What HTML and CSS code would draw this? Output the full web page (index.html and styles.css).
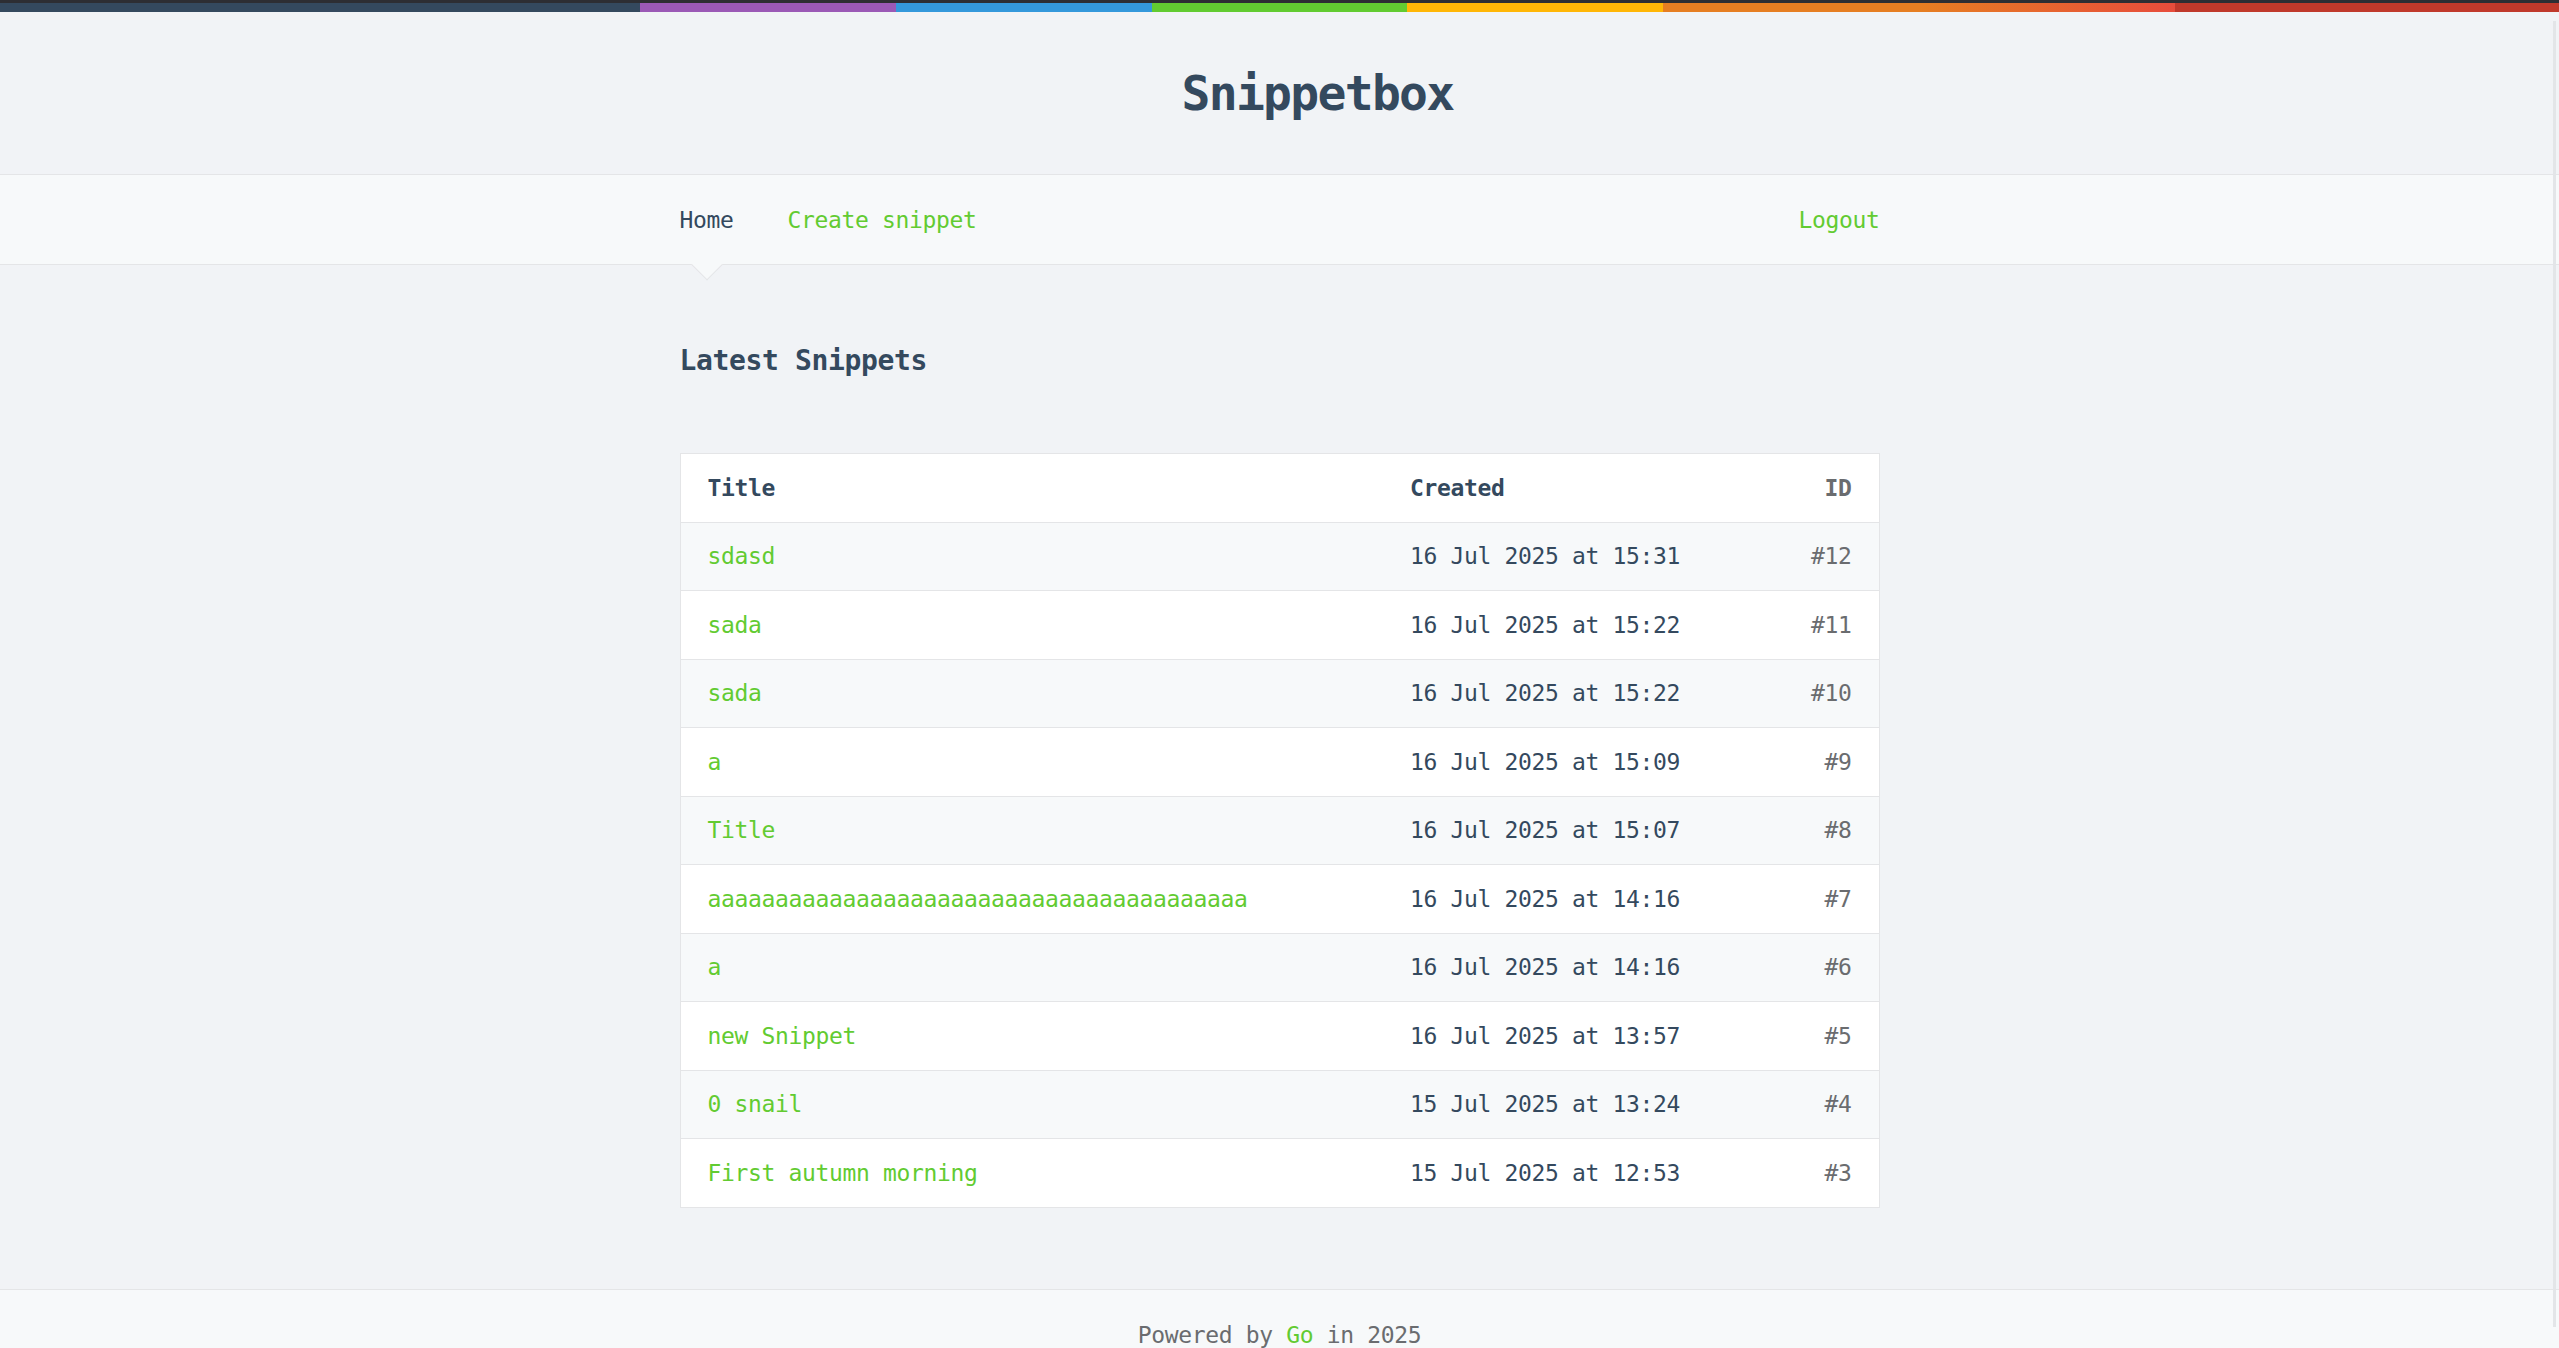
FILE: index.html
```html
<!DOCTYPE html>
<html lang="en">
<head>
<meta charset="utf-8">
<title>Home - Snippetbox</title>
<link rel="stylesheet" href="styles.css">
</head>
<body>
<div class="topline"></div>
<header class="site-header">
  <h1 class="brand"><a href="/">Snippetbox</a></h1>
</header>
<nav class="site-nav">
  <div class="nav-inner">
    <div class="nav-left">
      <a href="/" class="nav-link live">Home</a>
      <a href="/snippet/create" class="nav-link">Create snippet</a>
    </div>
    <div class="nav-right">
      <a href="/user/logout" class="nav-link">Logout</a>
    </div>
  </div>
</nav>
<main class="content">
  <h2 class="page-title">Latest Snippets</h2>
  <table class="snippets">
    <tr>
      <th class="col-title">Title</th>
      <th class="col-created">Created</th>
      <th class="col-id">ID</th>
    </tr>
    <tr><td><a href="#">sdasd</a></td><td>16 Jul 2025 at 15:31</td><td>#12</td></tr>
    <tr><td><a href="#">sada</a></td><td>16 Jul 2025 at 15:22</td><td>#11</td></tr>
    <tr><td><a href="#">sada</a></td><td>16 Jul 2025 at 15:22</td><td>#10</td></tr>
    <tr><td><a href="#">a</a></td><td>16 Jul 2025 at 15:09</td><td>#9</td></tr>
    <tr><td><a href="#">Title</a></td><td>16 Jul 2025 at 15:07</td><td>#8</td></tr>
    <tr><td><a href="#">aaaaaaaaaaaaaaaaaaaaaaaaaaaaaaaaaaaaaaaa</a></td><td>16 Jul 2025 at 14:16</td><td>#7</td></tr>
    <tr><td><a href="#">a</a></td><td>16 Jul 2025 at 14:16</td><td>#6</td></tr>
    <tr><td><a href="#">new Snippet</a></td><td>16 Jul 2025 at 13:57</td><td>#5</td></tr>
    <tr><td><a href="#">0 snail</a></td><td>15 Jul 2025 at 13:24</td><td>#4</td></tr>
    <tr><td><a href="#">First autumn morning</a></td><td>15 Jul 2025 at 12:53</td><td>#3</td></tr>
  </table>
</main>
<footer class="site-footer">
  Powered by <a href="https://golang.org/">Go</a> in 2025
</footer>
<div class="overlay-scroll"></div>
</body>
</html>
```
FILE: styles.css
```css
* {
  box-sizing: border-box;
  margin: 0;
  padding: 0;
}

html, body {
  background-color: #F1F3F6;
}

body {
  font-family: "DejaVu Sans Mono", "Liberation Mono", monospace;
  font-size: 23px;
  letter-spacing: -0.35px;
  line-height: 40.5px;
  color: #34495E;
  overflow: hidden;
}

a {
  color: #62CB31;
  text-decoration: none;
}

.topline {
  height: 3px;
  background: #2d2e33;
}

.site-header {
  background-image: linear-gradient(to right, #34495e, #34495e 25%, #9b59b6 25%, #9b59b6 35%, #3498db 35%, #3498db 45%, #62cb31 45%, #62cb31 55%, #ffb606 55%, #ffb606 65%, #e67e22 65%, #e67e22 75%, #e74c3c 85%, #e74c3c 85%, #c0392b 85%, #c0392b 100%);
  background-size: 100% 9px;
  background-repeat: no-repeat;
  border-bottom: 1px solid #E4E5E7;
  padding-top: 50px;
  padding-bottom: 40px;
  text-align: center;
}

.brand {
  line-height: 81px;
  height: 81px;
  padding-left: 76px;
}

.brand a {
  color: #34495E;
  font-size: 48px;
  font-weight: bold;
  letter-spacing: -1.7px;
}

.site-nav {
  background: #F7F9FA;
  border-bottom: 1px solid #E4E5E7;
  height: 90px;
  padding-top: 25px;
}

.nav-inner {
  width: 1200px;
  margin: 0 auto;
  display: flex;
  justify-content: space-between;
}

.nav-left {
  display: flex;
  gap: 54px;
}

.nav-link {
  display: inline-block;
  position: relative;
}

.nav-link.live {
  color: #34495E;
}

.nav-link.live::after {
  content: '';
  position: absolute;
  left: 50%;
  top: 54px;
  width: 21px;
  height: 21px;
  margin-left: -10.5px;
  background: #F7F9FA;
  border-left: 1px solid #E4E5E7;
  border-bottom: 1px solid #E4E5E7;
  transform: rotate(-45deg);
}

.content {
  width: 1200px;
  margin: 71px auto 81px;
}

.page-title {
  font-size: 28px;
  letter-spacing: -0.36px;
  line-height: 50px;
  font-weight: bold;
  margin-bottom: 67px;
}

.snippets {
  width: 1200px;
  background: #fff;
  border: 1px solid #E4E5E7;
  border-collapse: collapse;
}

.snippets tr {
  border-bottom: 1px solid #E4E5E7;
}

.snippets tr:nth-child(2n) {
  background-color: #F7F9FA;
}

.snippets th,
.snippets td {
  text-align: left;
  padding: 13.5px 27px;
  font-size: 23px;
  line-height: 40.5px;
  white-space: nowrap;
}

.snippets th {
  font-weight: bold;
}

.snippets th:last-child,
.snippets td:last-child {
  text-align: right;
  color: #6A6C6F;
}

.col-title {
  width: 703px;
}

.col-id {
  width: 160px;
}

.site-footer {
  border-top: 1px solid #E4E5E7;
  background: #F7F9FA;
  height: 90px;
  padding-top: 25px;
  color: #6A6C6F;
  text-align: center;
}

.overlay-scroll {
  position: fixed;
  top: 21px;
  right: 3px;
  width: 3px;
  height: 1306px;
  background: #e3e5e8;
}
```
